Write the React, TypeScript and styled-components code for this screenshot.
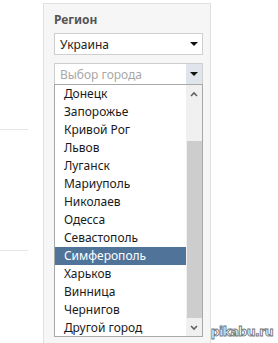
import styled, { createGlobalStyle } from "styled-components";

const cities = [
  "Донецк",
  "Запорожье",
  "Кривой Рог",
  "Львов",
  "Луганск",
  "Мариуполь",
  "Николаев",
  "Одесса",
  "Севастополь",
  "Симферополь",
  "Харьков",
  "Винница",
  "Чернигов",
  "Другой город",
];

const selected = "Симферополь";

const Global = createGlobalStyle`
  body {
    margin: 0;
    background: #fff;
    font-family: "Noto Sans", "Open Sans", sans-serif;
    font-size: 12px;
  }
`;

const Page = styled.div`
  display: flex;
  width: 278px;
  height: 343px;
  overflow: hidden;
`;

const LeftColumn = styled.div`
  width: 44px;
  display: flex;
  flex-direction: column;
  padding-top: 129px;
  gap: 120px;
`;

const Rule = styled.div`
  width: 28px;
  height: 1px;
  background: #e6e6e6;
`;

const Panel = styled.div`
  margin-top: 3px;
  width: 160px;
  padding: 8px 0 0 10px;
  background: #f6f6f6;
  border: 1px solid #e0e0e0;
  border-bottom: none;
  display: flex;
  flex-direction: column;
`;

const Label = styled.div`
  font-weight: bold;
  color: #555;
  font-size: 12px;
  line-height: 16px;
  height: 16px;
  margin-bottom: 5px;
`;

const Select = styled.div<{ $placeholder?: boolean }>`
  width: 149px;
  box-sizing: border-box;
  height: ${(p) => (p.$placeholder ? "21px" : "22px")};
  background: #fff;
  border: 1px solid #cfcfcf;
  display: flex;
  align-items: center;
  padding-left: 5px;
  color: ${(p) => (p.$placeholder ? "#a8a8a8" : "#222")};
  margin-bottom: ${(p) => (p.$placeholder ? "0" : "8px")};
  border-bottom: ${(p) => (p.$placeholder ? "none" : "1px solid #cfcfcf")};
`;

const SelectText = styled.span`
  flex: 1;
`;

const ArrowBox = styled.div<{ $filled?: boolean }>`
  width: 16px;
  align-self: stretch;
  display: flex;
  align-items: center;
  justify-content: center;
  background: ${(p) => (p.$filled ? "#dfe5eb" : "transparent")};
`;

const Triangle = styled.div`
  width: 0;
  height: 0;
  border-left: 4px solid transparent;
  border-right: 4px solid transparent;
  border-top: 4px solid #111;
`;

const List = styled.div`
  width: 149px;
  box-sizing: border-box;
  height: 253px;
  border: 1px solid #a9a9a9;
  background: #fff;
  display: flex;
`;

const Items = styled.div`
  flex: 1;
  display: flex;
  flex-direction: column;
`;

const Item = styled.div<{ $active?: boolean }>`
  height: 18px;
  line-height: 18px;
  padding-left: 9px;
  color: ${(p) => (p.$active ? "#fff" : "#1a1a1a")};
  background: ${(p) => (p.$active ? "#50739a" : "transparent")};
`;

const Scrollbar = styled.div`
  width: 16px;
  background: #f0f0f0;
  display: flex;
  flex-direction: column;
  align-items: stretch;
`;

const ScrollButton = styled.div`
  height: 17px;
  display: flex;
  align-items: center;
  justify-content: center;
`;

const Track = styled.div`
  flex: 1;
  display: flex;
  flex-direction: column;
  padding: 39px 0 0 1px;
`;

const Thumb = styled.div`
  height: 177px;
  background: #cdcdcd;
`;

const RightColumn = styled.div`
  flex: 1;
  display: flex;
  flex-direction: column;
  justify-content: flex-end;
  align-items: flex-end;
  padding: 0 5px 4px 0;
`;

const Watermark = styled.div`
  font-family: "DejaVu Sans", sans-serif;
  font-weight: bold;
  font-size: 12.5px;
  letter-spacing: -0.6px;
  color: #fff;
  -webkit-text-stroke: 0.9px #777;
`;

const Chevron = ({ up }: { up?: boolean }) => (
  <svg width="8" height="6" viewBox="0 0 8 6">
    <path
      d={up ? "M1 5 L4 2 L7 5" : "M1 1 L4 4 L7 1"}
      fill="none"
      stroke="#606060"
      strokeWidth="1.6"
    />
  </svg>
);

export default function App() {
  return (
    <Page>
      <Global />
      <LeftColumn>
        <Rule />
        <Rule />
      </LeftColumn>
      <Panel>
        <Label>Регион</Label>
        <Select>
          <SelectText>Украина</SelectText>
          <ArrowBox>
            <Triangle />
          </ArrowBox>
        </Select>
        <Select $placeholder>
          <SelectText>Выбор города</SelectText>
          <ArrowBox $filled>
            <Triangle />
          </ArrowBox>
        </Select>
        <List>
          <Items>
            {cities.map((c) => (
              <Item key={c} $active={c === selected}>
                {c}
              </Item>
            ))}
          </Items>
          <Scrollbar>
            <ScrollButton>
              <Chevron up />
            </ScrollButton>
            <Track>
              <Thumb />
            </Track>
            <ScrollButton>
              <Chevron />
            </ScrollButton>
          </Scrollbar>
        </List>
      </Panel>
      <RightColumn>
        <Watermark>pikabu.ru</Watermark>
      </RightColumn>
    </Page>
  );
}
